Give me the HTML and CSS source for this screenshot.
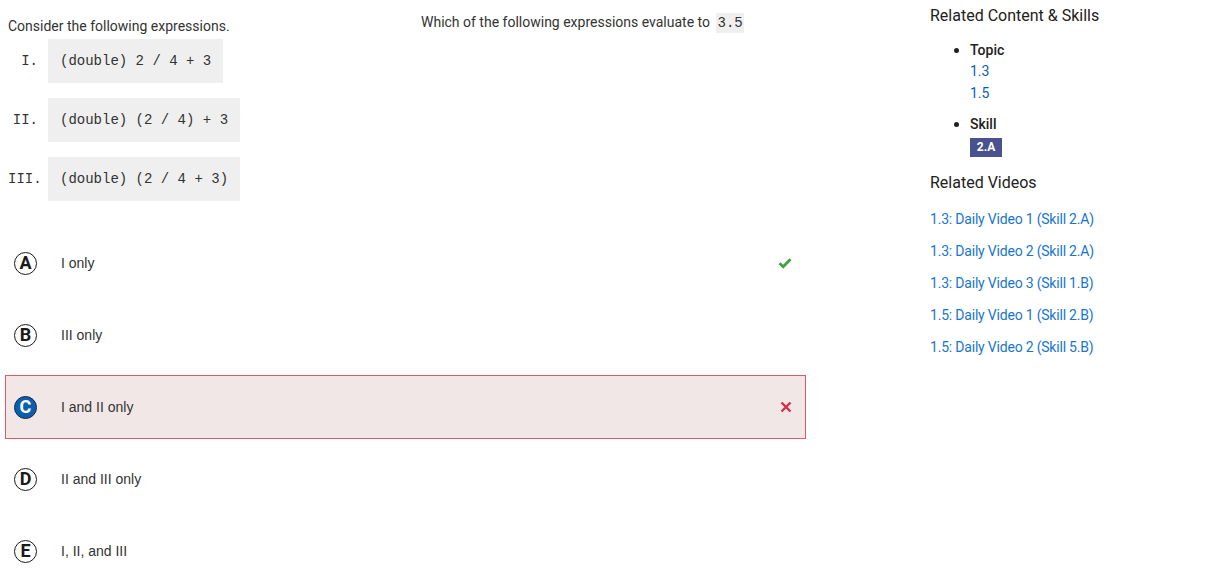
FILE: index.html
```html
<!DOCTYPE html>
<html>
<head>
<meta charset="utf-8">
<link rel="stylesheet" href="styles.css">
</head>
<body>
<div class="page">
  <main class="main">
    <div class="top">
      <section class="stimulus">
        <p class="intro">Consider the following expressions.</p>
        <div class="exprs">
          <div class="expr"><span class="roman">I.</span><code class="codebox">(double) 2 / 4 + 3</code></div>
          <div class="expr"><span class="roman">II.</span><code class="codebox">(double) (2 / 4) + 3</code></div>
          <div class="expr"><span class="roman">III.</span><code class="codebox">(double) (2 / 4 + 3)</code></div>
        </div>
      </section>
      <section class="question">
        <p class="qtext">Which of the following expressions evaluate to <code class="inline">3.5</code></p>
      </section>
    </div>
    <div class="options">
      <div class="option">
        <span class="letter">A</span><span class="otext">I only</span>
        <svg class="mark" width="14" height="12" viewBox="0 0 14 12"><path d="M1.5 6.2 L5.2 9.8 L12.5 2.2" fill="none" stroke="#3fa33f" stroke-width="2.8"/></svg>
      </div>
      <div class="option">
        <span class="letter">B</span><span class="otext">III only</span>
      </div>
      <div class="option wrong">
        <span class="letter selected">C</span><span class="otext">I and II only</span>
        <svg class="mark" width="12" height="12" viewBox="0 0 12 12"><path d="M1.5 1.5 L10.5 10.5 M10.5 1.5 L1.5 10.5" fill="none" stroke="#d33048" stroke-width="2.4"/></svg>
      </div>
      <div class="option">
        <span class="letter">D</span><span class="otext">II and III only</span>
      </div>
      <div class="option">
        <span class="letter">E</span><span class="otext">I, II, and III</span>
      </div>
    </div>
  </main>
  <aside class="side">
    <h2 class="sh">Related Content &amp; Skills</h2>
    <ul class="rel">
      <li><span class="rl">Topic</span>
        <a class="tlink" href="#">1.3</a>
        <a class="tlink" href="#">1.5</a>
      </li>
      <li class="skill"><span class="rl">Skill</span>
        <span class="badge">2.A</span>
      </li>
    </ul>
    <h2 class="sh videos-h">Related Videos</h2>
    <div class="videos">
      <a class="vlink" href="#">1.3: Daily Video 1 (Skill 2.A)</a>
      <a class="vlink" href="#">1.3: Daily Video 2 (Skill 2.A)</a>
      <a class="vlink" href="#">1.3: Daily Video 3 (Skill 1.B)</a>
      <a class="vlink" href="#">1.5: Daily Video 1 (Skill 2.B)</a>
      <a class="vlink" href="#">1.5: Daily Video 2 (Skill 5.B)</a>
    </div>
  </aside>
</div>
</body>
</html>
```
FILE: styles.css
```css
* { box-sizing: border-box; }
body {
  margin: 0;
  font-family: Roboto, "Liberation Sans", sans-serif;
  color: #333;
  background: #fff;
}
.page {
  display: flex;
  align-items: flex-start;
}
.main {
  width: 801px;
  margin-left: 5px;
  flex: none;
}
.top {
  display: flex;
}
.stimulus {
  width: 416px;
  padding-left: 3px;
}
.intro {
  margin: 16px 0 0;
  font-size: 14px;
  line-height: 20px;
  color: #333;
}
.exprs {
  margin-top: 3px;
  display: flex;
  flex-direction: column;
  gap: 15px;
}
.expr {
  display: flex;
  align-items: center;
}
.roman {
  width: 30px;
  text-align: right;
  font-family: "Liberation Mono", monospace;
  font-size: 14px;
  color: #333;
  margin-right: 10px;
}
.codebox {
  font-family: "Liberation Mono", monospace;
  font-size: 14px;
  line-height: 20px;
  background: #efefef;
  padding: 12px 12px;
  color: #333;
  white-space: pre;
}
.question {
  flex: 1;
}
.qtext {
  margin: 12px 0 0;
  font-size: 14px;
  line-height: 20px;
  color: #333;
}
.inline {
  font-family: "Liberation Mono", monospace;
  font-size: 14px;
  background: #efefef;
  padding: 2px 1px;
  margin-left: 3px;
  color: #333;
}
.options {
  margin-top: 30px;
  display: flex;
  flex-direction: column;
  gap: 8px;
}
.option {
  height: 64px;
  display: flex;
  align-items: center;
  padding: 0 13px 0 8px;
  border: 1px solid transparent;
}
.option.wrong {
  background: #f2e7e7;
  border-color: #e2596b;
}
.letter {
  width: 23px;
  height: 23px;
  border-radius: 50%;
  border: 1.5px solid #1a1a1a;
  display: flex;
  align-items: center;
  justify-content: center;
  font-family: Roboto, "Liberation Sans", sans-serif;
  font-weight: bold;
  font-size: 18px;
  line-height: 1;
  color: #1a1a1a;
  flex: none;
}
.letter.selected {
  background: #0b5ead;
  border-color: #172a4d;
  color: #fff;
}
.otext {
  margin-left: 24px;
  font-family: "Liberation Sans", Arial, sans-serif;
  font-size: 14px;
  color: #333;
  flex: 1;
}
.mark {
  flex: none;
}
.side {
  margin-left: 124px;
  width: 280px;
}
.sh {
  margin: 6px 0 0;
  font-size: 16px;
  line-height: 20px;
  font-weight: 400;
  color: #212121;
}
.rel {
  margin: 14px 0 0;
  padding-left: 40px;
  font-size: 14px;
  list-style: none;
}
.rel li {
  line-height: 20px;
}
.rel li.skill {
  margin-top: 10px;
}
.rl {
  font-weight: 500;
  color: #212121;
  display: block;
  position: relative;
}
.rl::before {
  content: "";
  position: absolute;
  left: -16px;
  top: 8px;
  width: 5px;
  height: 5px;
  border-radius: 50%;
  background: #212121;
}
.tlink {
  display: block;
  line-height: 22px;
  color: #0b60b6;
  text-decoration: none;
}
.badge {
  display: inline-block;
  margin-top: 4px;
  height: 19px;
  line-height: 19px;
  width: 32px;
  text-align: center;
  background: #47528f;
  color: #fff;
  font-weight: bold;
  font-size: 12px;
}
.videos-h {
  margin-top: 16px;
}
.videos {
  margin-top: 16px;
  display: flex;
  flex-direction: column;
  gap: 12px;
}
.vlink {
  font-size: 14px;
  letter-spacing: -0.2px;
  line-height: 20px;
  color: #1776cf;
  text-decoration: none;
}
```
